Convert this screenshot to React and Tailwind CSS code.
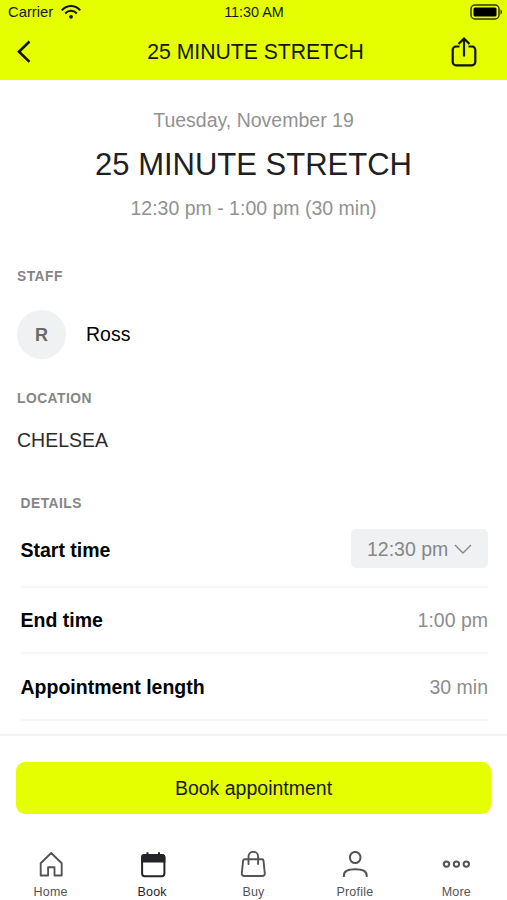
const SectionLabel = ({ children }) => (
  <h2 className="pt-px text-[13.8px] font-bold leading-5 tracking-[0.5px] text-[#858585]">{children}</h2>
);

const Row = ({ label, className, children }) => (
  <div className={`flex items-center justify-between border-b-2 border-[#f6f6f6] ${className}`}>
    <span className="font-bold text-black">{label}</span>
    {children}
  </div>
);

const HomeIcon = () => (
  <svg width="28" height="28" viewBox="0 0 28 28" fill="none" stroke="#545456" strokeWidth="1.9" strokeLinejoin="round">
    <path d="M3.7 12.2 14.200 2l10.500 10.200v12.300h-7.200v-8.200h-6.400v8.200H3.700Z" />
  </svg>
);

const BookIcon = () => (
  <svg width="28" height="28" viewBox="0 0 28 28" fill="none" stroke="#242428" strokeWidth="2">
    <rect x="4.100" y="4" width="22.300" height="21.200" rx="2.600" />
    <path d="M4.100 10.500V6.400A2.400 2.400 0 0 1 6.500 4h17.500a2.400 2.400 0 0 1 2.400 2.400v4.100Z" fill="#242428" />
    <path d="M9.500 1.300V5M21 1.300V5" />
  </svg>
);

const BuyIcon = () => (
  <svg width="28" height="28" viewBox="0 0 28 28" fill="none" stroke="#545456" strokeWidth="1.9" strokeLinecap="round" strokeLinejoin="round">
    <path d="M5.600 8.300h17.400a1.500 1.500 0 0 1 1.500 1.300l1.300 12.900a2.300 2.300 0 0 1-2.300 2.500H5.100a2.300 2.300 0 0 1-2.300-2.500L4.100 9.600a1.500 1.500 0 0 1 1.500-1.300Z" />
    <path d="M9.500 13V5.600a4.800 4.800 0 0 1 9.600 0V13" />
  </svg>
);

const ProfileIcon = () => (
  <svg width="28" height="28" viewBox="0 0 28 28" fill="none" stroke="#545456" strokeWidth="2">
    <ellipse cx="14.200" cy="6.500" rx="5.300" ry="5.600" />
    <path d="M2.900 26v-1.500C2.900 20.500 6.700 18.300 14.200 18.300s11.500 2.200 11.500 6.200V26" />
  </svg>
);

const MoreIcon = () => (
  <svg width="28" height="28" viewBox="0 0 28 28" fill="none" stroke="#545456" strokeWidth="2">
    <circle cx="4.500" cy="13.100" r="2.700" />
    <circle cx="14.400" cy="13.100" r="2.700" />
    <circle cx="24.300" cy="13.100" r="2.700" />
  </svg>
);

const tabs = [
  { label: "Home", Icon: HomeIcon },
  { label: "Book", Icon: BookIcon, active: true },
  { label: "Buy", Icon: BuyIcon },
  { label: "Profile", Icon: ProfileIcon },
  { label: "More", Icon: MoreIcon },
];

export default function App() {
  return (
    <div className="flex h-[900px] w-[507px] flex-col overflow-hidden bg-white font-['Liberation_Sans',Arial,sans-serif] text-[19.5px] leading-6">
      <header className="h-20 shrink-0 bg-[#e6ff00] text-[#151800]">
        <div className="grid h-6 grid-cols-3 items-center pl-2 pr-1 text-[14.4px]">
          <div className="flex items-center gap-2">
            <span className="text-[14.8px]">Carrier</span>
            <svg width="20" height="14" viewBox="0 0 20 14" fill="none" stroke="#111400" strokeWidth="2">
              <path d="M.8 5.400C6-.5 14-.5 19.200 5.400M4.200 8.500c3.400-3.600 8.200-3.600 11.600 0" />
              <circle cx="10" cy="11.800" r="1.900" fill="#111400" stroke="none" />
            </svg>
          </div>
          <span className="-ml-[3px] text-center">11:30 AM</span>
          <svg className="justify-self-end" width="33" height="16" viewBox="0 0 33 16">
            <rect x="1" y="1" width="28" height="14" rx="4" fill="none" stroke="#333900" strokeWidth="1.500" />
            <rect x="3.500" y="3.500" width="23" height="9" rx="1.500" fill="#000" />
            <path d="M30.500 5.500c2 .4 2 4.600 0 5Z" fill="#333900" />
          </svg>
        </div>
        <div className="grid h-14 grid-cols-[60px_1fr_60px] items-center pl-4 pr-[14px]">
          <svg width="16" height="24" viewBox="0 0 16 24" fill="none" stroke="#111400" strokeWidth="2.600">
            <path d="M13.500 1.500 3 11.700l10.500 10.200" />
          </svg>
          <h1 className="pl-[2px] text-center text-[21.2px]">25 MINUTE STRETCH</h1>
          <svg className="ml-[17px]" width="28" height="32" viewBox="0 0 28 32" fill="none" stroke="#111400" strokeWidth="2.200">
            <path d="M9.500 10.500H6A3.300 3.300 0 0 0 2.700 13.800v12.200a3.300 3.300 0 0 0 3.300 3.300h16a3.300 3.300 0 0 0 3.300-3.300V13.800a3.300 3.300 0 0 0-3.300-3.300H18.500M14 20.500V3M8.500 8 14 2.500 19.500 8" />
          </svg>
        </div>
      </header>

      <main className="flex h-[654px] shrink-0 flex-col overflow-hidden">
        <section className="flex flex-col items-center pt-7 text-[#929292]">
          <p>Tuesday, November 19</p>
          <p className="mt-[13px] text-[31px] leading-[40px] text-[#202022]">25 MINUTE STRETCH</p>
          <p className="mt-[11px]">12:30 pm - 1:00 pm (30 min)</p>
        </section>

        <section className="px-[17px] pt-[46px]">
          <SectionLabel>STAFF</SectionLabel>
          <div className="mt-[23px] flex items-center gap-5">
            <div className="flex size-[49px] items-center justify-center rounded-full bg-[#eff1f3] text-[18px] font-bold text-[#69696b]">R</div>
            <span className="pb-[2px] text-black">Ross</span>
          </div>
          <div className="mt-[29px]">
            <SectionLabel>LOCATION</SectionLabel>
          </div>
          <p className="mt-[19px] text-[#2c2c2e]">CHELSEA</p>
        </section>

        <section className="pl-[20.5px] pr-[19px] pt-[41px]">
          <SectionLabel>DETAILS</SectionLabel>
          <Row label="Start time" className="h-[74px]">
            <button className="mb-[4px] flex h-[39px] w-[137px] items-center gap-[6px] rounded-[5px] bg-[#eff1f3] pl-4 pt-px text-[#858789]">
              12:30 pm
              <svg className="mt-px" width="18" height="12" viewBox="0 0 18 12" fill="none" stroke="#858789" strokeWidth="1.400">
                <path d="m1 2 8 8 8-8" />
              </svg>
            </button>
          </Row>
          <Row label="End time" className="h-[66px]">
            <span className="text-[#8d8d8d]">1:00 pm</span>
          </Row>
          <Row label="Appointment length" className="h-[67px]">
            <span className="text-[#8d8d8d]">30 min</span>
          </Row>
        </section>
      </main>

      <footer className="flex grow flex-col border-t-2 border-[#f3f3f3] pt-[26px]">
        <button className="mx-4 h-[52px] shrink-0 rounded-[9px] bg-[#e6ff00] text-[#171a00]">Book appointment</button>
        <nav className="mt-[37px] grid grid-cols-5">
          {tabs.map(({ label, Icon, active }) => (
            <div key={label} className={`flex flex-col items-center text-[12.5px] leading-4 tracking-[0.2px] ${active ? "text-[#242428]" : "text-[#545456]"}`}>
              <Icon />
              <span className="mt-[5px]">{label}</span>
            </div>
          ))}
        </nav>
      </footer>
    </div>
  );
}
